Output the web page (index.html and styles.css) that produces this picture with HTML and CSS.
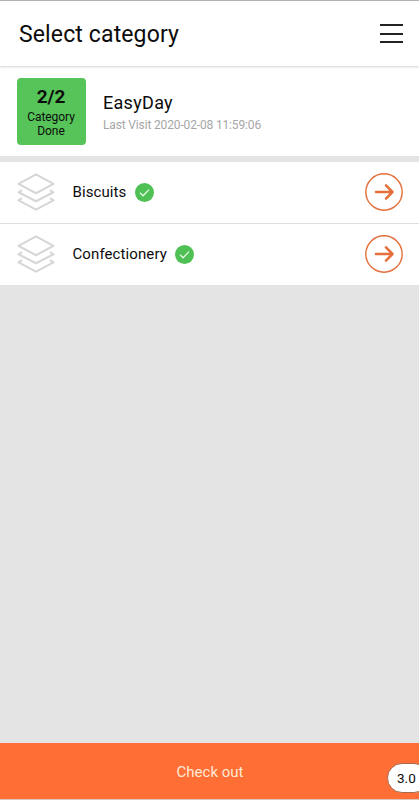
FILE: index.html
```
<!DOCTYPE html>
<html lang="en">
<head>
    <meta charset="UTF-8">
    <title>Select category</title>
    <meta name="viewport" content="width=device-width,initial-scale=1">
    <link rel="stylesheet" href="styles.css">
</head>
<body>
    <svg class="defs" width="0" height="0">
        <symbol id="layers" viewBox="0 0 38 38">
            <path d="M19 1.4L36.5 10.8L19 20.2L1.5 10.8Z"/>
            <path d="M5 17.2L1.5 19.3L19 28.3L36.5 19.3L33 17.2"/>
            <path d="M5 25.2L1.5 27.4L19 36.6L36.5 27.4L33 25.2"/>
        </symbol>
        <symbol id="check" viewBox="0 0 19 19">
            <path d="M5 9.8L8.1 12.8L14 6.6"/>
        </symbol>
        <symbol id="arrow" viewBox="0 0 38 38">
            <circle cx="19" cy="19" r="18.2"/>
            <path d="M11 19H27.5M21 12.4L27.5 19L21 25.6"/>
        </symbol>
    </svg>
    <div class="page">
        <header class="header">
            <h1 class="title">Select category</h1>
            <div class="menu">
                <span></span>
                <span></span>
                <span></span>
            </div>
        </header>
        <div class="store">
            <div class="badge">
                <strong>2/2</strong>
                <span>Category</span>
                <span>Done</span>
            </div>
            <div class="info">
                <h2 class="name">EasyDay</h2>
                <p class="visit">Last Visit 2020-02-08 11:59:06</p>
            </div>
        </div>
        <div class="list">
            <div class="item">
                <svg class="layers"><use href="#layers"/></svg>
                <span class="label">Biscuits</span>
                <svg class="check"><use href="#check"/></svg>
                <svg class="arrow"><use href="#arrow"/></svg>
            </div>
            <div class="item">
                <svg class="layers"><use href="#layers"/></svg>
                <span class="label">Confectionery</span>
                <svg class="check"><use href="#check"/></svg>
                <svg class="arrow"><use href="#arrow"/></svg>
            </div>
        </div>
        <footer class="footer">
            <span class="checkout">Check out</span>
            <span class="version">3.0</span>
        </footer>
    </div>
</body>
</html>
```
FILE: styles.css
```
html,body{
    height:100%;
}
body{
    margin:0;
    font-family:Roboto,"Liberation Sans",sans-serif;
    color:#0c0c0c;
    background-color:#e4e4e4;
}
h1,h2,p{
    margin:0;
    font-weight:400;
}
.defs{
    position:absolute;
}
.page{
    display:flex;
    flex-direction:column;
    height:100%;
    overflow:hidden;
    box-sizing:border-box;
    border-top:1px solid #b3b3b3;
    border-bottom:1px solid #d9c5bc;
}
.header{
    display:flex;
    align-items:center;
    justify-content:space-between;
    height:65px;
    padding:0 16px 0 19px;
    background-color:#fff;
    box-shadow:0 1px 2px rgba(0,0,0,.18);
    z-index:1;
}
.title{
    font-size:23px;
    line-height:30px;
    letter-spacing:.13px;
    padding-top:3px;
}
.menu{
    display:flex;
    flex-direction:column;
    gap:6.5px;
}
.menu span{
    width:23px;
    height:2px;
    background-color:#222;
}
.store{
    display:flex;
    height:90px;
    padding-left:17px;
    background-color:#fff;
}
.badge{
    display:flex;
    flex-direction:column;
    align-items:center;
    box-sizing:border-box;
    width:69px;
    height:67px;
    margin-top:12px;
    padding:7px 1px 0 0;
    border-radius:4px;
    background-color:#56c458;
    font-size:12px;
    line-height:14px;
    letter-spacing:-.05px;
}
.badge strong{
    font-size:19px;
    line-height:24px;
    padding-bottom:1px;
}
.info{
    padding:25px 0 0 17px;
}
.name{
    font-size:18px;
    line-height:24px;
    letter-spacing:.3px;
}
.visit{
    font-size:12px;
    line-height:20px;
    letter-spacing:-.15px;
    color:#a6a6a6;
}
.list{
    margin-top:6px;
    background-color:#fff;
}
.item{
    display:flex;
    align-items:center;
    box-sizing:border-box;
    height:61px;
    padding:0 16px 1px 17px;
}
.item + .item{
    height:62px;
    border-top:1px solid #dedede;
}
svg{
    flex:none;
    fill:none;
}
.layers{
    width:38px;
    height:38px;
    stroke:#d6d6d6;
    stroke-width:2.1;
    stroke-linejoin:round;
}
.label{
    margin-left:17.5px;
    font-size:15px;
    letter-spacing:.1px;
}
.check{
    width:19px;
    height:19px;
    margin-left:8.5px;
    border-radius:50%;
    background-color:#4fc154;
    stroke:#e6f7e6;
    stroke-width:1.3;
}
.arrow{
    width:38px;
    height:38px;
    margin-left:auto;
    stroke:#e56f3d;
    stroke-width:1.4;
    stroke-linecap:round;
    stroke-linejoin:round;
}
#arrow path{
    stroke-width:2.5;
}
.footer{
    position:relative;
    display:flex;
    align-items:center;
    justify-content:center;
    box-sizing:border-box;
    height:56px;
    margin-top:auto;
    padding:2px 0 0 1px;
    background-color:#ff6e34;
}
.checkout{
    font-size:15px;
    color:#ffe9d6;
}
/* version pill runs past the right edge */
.version{
    position:absolute;
    right:-10px;
    bottom:6px;
    box-sizing:border-box;
    width:42px;
    height:30px;
    padding-left:9px;
    border:1px solid #a86a4c;
    border-radius:15px;
    background-color:#fff;
    font-size:13.5px;
    line-height:28px;
}
```
